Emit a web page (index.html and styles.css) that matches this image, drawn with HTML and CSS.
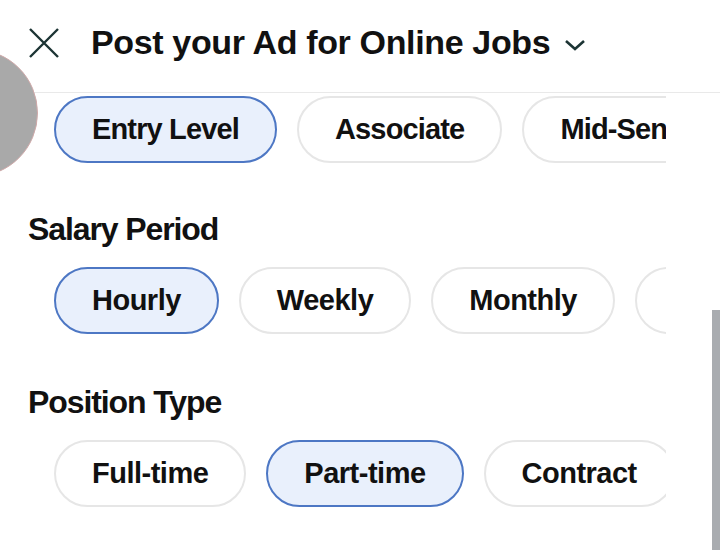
FILE: index.html
```html
<!DOCTYPE html>
<html>
<head>
<meta charset="utf-8">
<link rel="stylesheet" href="styles.css">
</head>
<body>
<div class="screen">
  <header class="topbar">
    <svg class="close" width="32" height="32" viewBox="0 0 32 32"><path d="M2 2 L30 30 M30 2 L2 30" stroke="#1c3434" stroke-width="2.4" fill="none"/></svg>
    <h1 class="title">Post your Ad for Online Jobs</h1>
    <svg class="chev" width="22" height="12" viewBox="0 0 22 12"><path d="M2 2 L11 10 L20 2" stroke="#1c3434" stroke-width="2.6" fill="none"/></svg>
  </header>

  <div class="chips first">
    <span class="chip selected">Entry Level</span>
    <span class="chip">Associate</span>
    <span class="chip">Mid-Senior Level</span>
  </div>

  <h2 class="label">Salary Period</h2>
  <div class="chips">
    <span class="chip selected">Hourly</span>
    <span class="chip">Weekly</span>
    <span class="chip">Monthly</span>
    <span class="chip">Yearly</span>
  </div>

  <h2 class="label second">Position Type</h2>
  <div class="chips">
    <span class="chip">Full-time</span>
    <span class="chip selected">Part-time</span>
    <span class="chip">Contract</span>
    <span class="chip">Temporary</span>
  </div>

  <div class="touch-dot"></div>
  <div class="scrollbar"></div>
</div>
</body>
</html>
```

FILE: styles.css
```css
html, body {
  margin: 0;
  padding: 0;
  background: #ffffff;
}
body {
  font-family: "Liberation Sans", Arial, sans-serif;
  color: #111111;
}
.screen {
  position: relative;
  width: 720px;
  height: 550px;
  overflow: hidden;
}
.topbar {
  box-sizing: border-box;
  height: 93px;
  padding: 0 0 9px 28px;
  display: flex;
  align-items: center;
  border-bottom: 1px solid #e9e9e9;
}
.close {
  flex: none;
  margin-top: 2px;
}
.title {
  margin: 0 0 0 31px;
  font-size: 34px;
  line-height: 40px;
  font-weight: 700;
  letter-spacing: -0.35px;
}
.chev {
  margin: 6px 0 0 14px;
  flex: none;
}
.chips {
  display: flex;
  gap: 20px;
  margin-left: 54px;
  width: 612px;
  overflow: hidden;
}
.chips.first {
  margin-top: 3px;
}
.chip {
  flex: none;
  box-sizing: border-box;
  height: 67px;
  padding: 0 36px;
  display: flex;
  align-items: center;
  border: 2px solid #e6e6e6;
  border-radius: 34px;
  background: #ffffff;
  font-size: 29px;
  font-weight: 700;
  letter-spacing: -0.5px;
  white-space: nowrap;
}
.chips.first .chip {
  letter-spacing: -0.85px;
}
.chip.selected {
  background: #e9f0fc;
  border: 2.5px solid #4d77c4;
}
.label {
  margin: 46px 0 18px 28px;
  font-size: 32px;
  line-height: 40px;
  font-weight: 700;
  letter-spacing: -1.1px;
}
.label.second {
  margin-top: 48px;
}
.touch-dot {
  position: absolute;
  left: -90px;
  top: 49px;
  width: 128px;
  height: 128px;
  box-sizing: border-box;
  border-radius: 50%;
  background: #a9a9a9;
  border: 1.5px solid #cfa9a9;
}
.scrollbar {
  position: absolute;
  right: 0;
  top: 310px;
  bottom: 0;
  width: 8px;
  background: #a9acb0;
}
```
